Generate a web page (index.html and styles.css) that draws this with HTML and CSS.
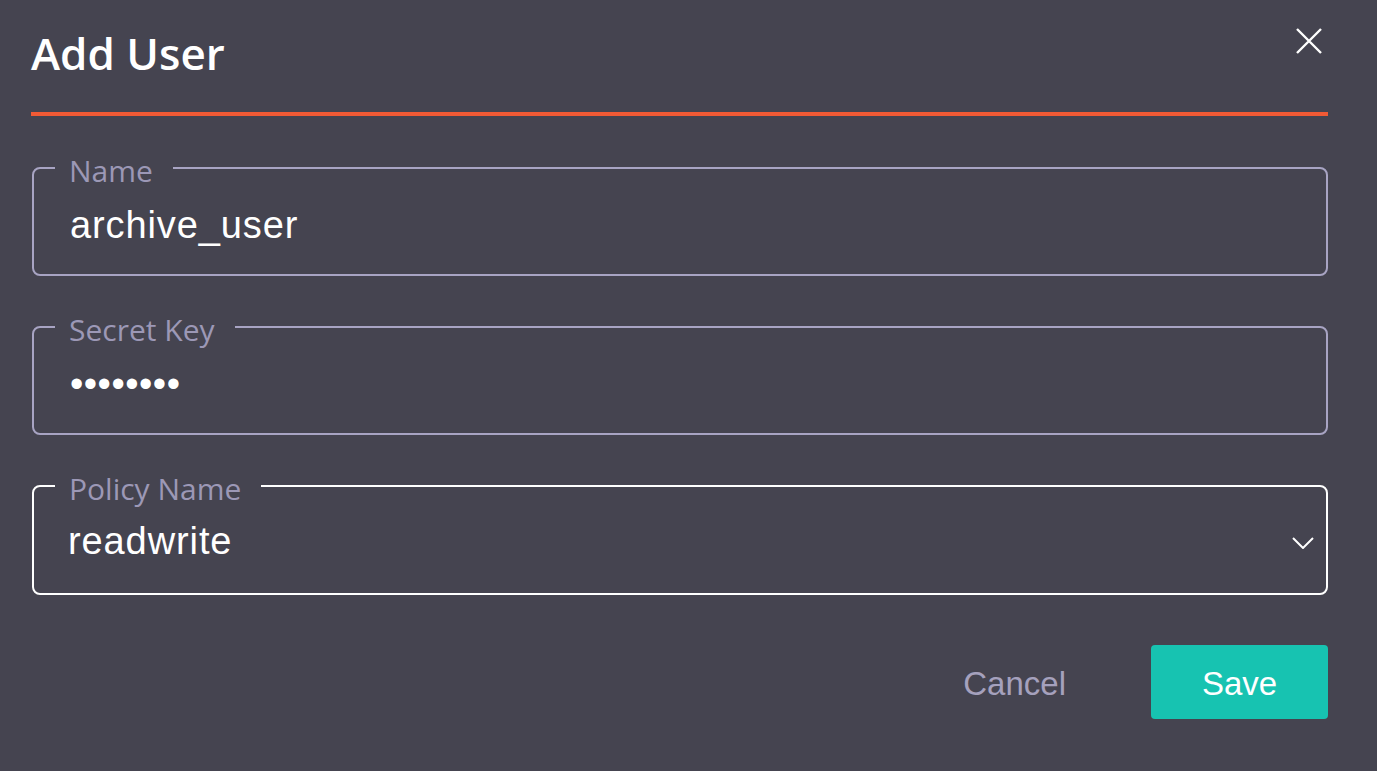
FILE: index.html
```html
<!DOCTYPE html>
<html lang="en">
<head>
<meta charset="utf-8">
<title>Add User</title>
<link rel="stylesheet" href="styles.css">
</head>
<body>
<div class="dialog">
  <header class="dialog-header">
    <h1 class="dialog-title">Add User</h1>
    <button class="close-btn" aria-label="Close">
      <svg width="26" height="26" viewBox="0 0 26 26"><path d="M1 1 L25 25 M25 1 L1 25" stroke="#fff" stroke-width="2.4" fill="none"/></svg>
    </button>
  </header>
  <div class="accent-line"></div>
  <form class="fields">
    <fieldset class="field">
      <legend class="field-label">Name</legend>
      <div class="field-value">archive_user</div>
    </fieldset>
    <fieldset class="field">
      <legend class="field-label">Secret Key</legend>
      <div class="field-value secret">••••••••</div>
    </fieldset>
    <fieldset class="field field-active">
      <legend class="field-label">Policy Name</legend>
      <div class="field-value select">
        <span class="select-text">readwrite</span>
        <svg class="chevron" width="22" height="12" viewBox="0 0 22 12"><path d="M1 1 L11 11 L21 1" stroke="#fff" stroke-width="2" fill="none"/></svg>
      </div>
    </fieldset>
  </form>
  <footer class="dialog-footer">
    <button class="btn-cancel" type="button">Cancel</button>
    <button class="btn-save" type="button">Save</button>
  </footer>
</div>
</body>
</html>
```

FILE: styles.css
```css
html, body {
  margin: 0;
  padding: 0;
}
body {
  background: #454450;
  width: 1377px;
  height: 771px;
  overflow: hidden;
}
.dialog {
  padding: 23px 49px 0 31px;
}
.dialog-header {
  display: flex;
  justify-content: space-between;
  align-items: flex-start;
}
.dialog-title {
  margin: 0;
  font-family: "Open Sans", sans-serif;
  font-weight: 600;
  font-size: 44px;
  line-height: 60px;
  color: #ffffff;
}
.close-btn {
  margin: 5px 6px 0 0;
  padding: 0;
  border: none;
  background: none;
  width: 26px;
  height: 26px;
  display: block;
}
.close-btn svg {
  display: block;
}
.accent-line {
  margin-top: 29px;
  height: 4px;
  background: #f15a35;
}
.fields {
  margin-top: 34px;
  display: flex;
  flex-direction: column;
  gap: 33px;
}
.field {
  margin: 0 0 0 1px;
  padding: 0 12px 0 21px;
  border: 2px solid #a8a4c3;
  border-radius: 8px;
  min-width: 0;
}
.field-active {
  border-color: #ffffff;
}
.field-label {
  margin-left: 0;
  padding: 6px 20px 0 14px;
  font-family: "Open Sans", sans-serif;
  font-size: 30px;
  line-height: 30px;
  color: #9c98b6;
}
.field-value {
  padding: 17px 0 27px 15px;
  font-family: "Liberation Sans", Arial, sans-serif;
  font-size: 38px;
  line-height: 44px;
  letter-spacing: 0.9px;
  color: #ffffff;
}
.secret {
  letter-spacing: 0.5px;
}
.select {
  display: flex;
  justify-content: space-between;
  align-items: center;
  padding-top: 15px;
  padding-left: 13px;
  padding-bottom: 30px;
}
.chevron {
  display: block;
  margin-top: 4px;
}
.dialog-footer {
  margin-top: 50px;
  display: flex;
  justify-content: flex-end;
  align-items: center;
}
.btn-cancel {
  margin-right: 85px;
  padding: 4px 0 0;
  border: none;
  background: none;
  font-family: "Liberation Sans", Arial, sans-serif;
  font-size: 33px;
  color: #a5a1bd;
}
.btn-save {
  width: 177px;
  height: 74px;
  border: none;
  border-radius: 4px;
  background: #17c3b1;
  color: #ffffff;
  font-family: "Liberation Sans", Arial, sans-serif;
  font-size: 33px;
  padding: 4px 0 0;
}
```
